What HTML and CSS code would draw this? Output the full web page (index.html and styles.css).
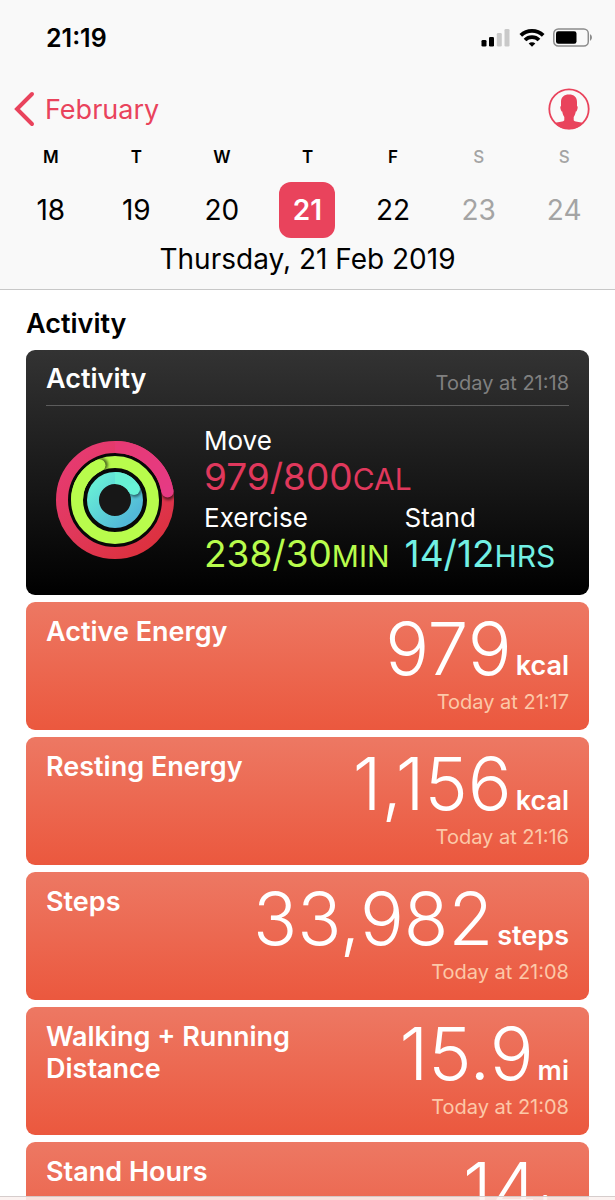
FILE: index.html
```html
<!DOCTYPE html>
<html lang="en">
<head>
<meta charset="utf-8">
<meta name="viewport" content="width=device-width, initial-scale=1">
<title>Health Data</title>
<link rel="stylesheet" href="styles.css">
</head>
<body>
<div class="app">
  <header class="header">
    <div class="status">
      <span class="time">21:19</span>
      <div class="status-icons">
        <svg width="30" height="20" viewBox="0 0 30 20" aria-hidden="true">
          <rect x="0.5" y="12" width="5" height="6.5" rx="1.3"/>
          <rect x="8" y="9" width="5" height="9.500" rx="1.300"/>
          <rect class="dim" x="15.800" y="5" width="5" height="13.500" rx="1.300"/>
          <rect class="dim" x="23.500" y="1" width="5" height="17.500" rx="1.300"/>
        </svg>
        <svg width="26" height="20" viewBox="0 0 26 20" aria-hidden="true">
          <g fill="none" stroke="#000" stroke-width="3.800">
            <path d="M1.800 7.300a16.200 16.200 0 0 1 22.400 0"/>
            <path d="M6 12a10 10 0 0 1 14 0"/>
          </g>
          <path d="M13 18.800l-3.300-3.200a4.700 4.700 0 0 1 6.600 0z"/>
        </svg>
        <svg width="42" height="20" viewBox="0 0 42 20" aria-hidden="true">
          <rect x="0.800" y="1" width="34.500" height="17" rx="4.500" fill="none" stroke="#8c8c8c" stroke-width="1.500"/>
          <rect x="3" y="3.300" width="20.500" height="12.400" rx="2.300"/>
          <path d="M37 6.300c2.600 1 2.600 5.400 0 6.400z" fill="#8c8c8c"/>
        </svg>
      </div>
    </div>
    <nav class="nav">
      <button class="back" type="button">
        <svg width="22" height="36" viewBox="0 0 22 36" aria-hidden="true"><path d="M18 3L3 18l15 15" fill="none" stroke="currentColor" stroke-width="4" stroke-linecap="round" stroke-linejoin="miter"/></svg>
        <span>February</span>
      </button>
      <button class="profile" type="button" aria-label="Profile">
        <svg width="42" height="42" viewBox="0 0 42 42" aria-hidden="true">
          <circle cx="21" cy="21" r="19.700" fill="none" stroke="currentColor" stroke-width="1.800"/>
          <path fill="currentColor" d="M21 6.500c5 0 8 2.600 8 7.500v4c1 .2.900 2.500-.2 4.700-.4.700-.8.700-1 .9-.4 2.700-1.300 4.300-2.100 5.500v3.200c.6 1.600 5.300 1.500 9.300 2.700C31.500 39.500 26.500 41.200 21 41.200S10.500 39.500 7 35c4-1.200 8.700-1.100 9.300-2.700v-3.200c-.8-1.200-1.700-2.800-2.100-5.500-.2-.2-.6-.2-1-.9-1.100-2.200-1.200-4.500-.2-4.700v-4c0-4.900 3-7.500 8-7.500z"/>
        </svg>
      </button>
    </nav>
    <div class="week">
      <div class="day"><span class="name">M</span><button type="button" class="date">18</button></div>
      <div class="day"><span class="name">T</span><button type="button" class="date">19</button></div>
      <div class="day"><span class="name">W</span><button type="button" class="date">20</button></div>
      <div class="day"><span class="name">T</span><button type="button" class="date selected">21</button></div>
      <div class="day"><span class="name">F</span><button type="button" class="date">22</button></div>
      <div class="day weekend"><span class="name">S</span><button type="button" class="date">23</button></div>
      <div class="day weekend"><span class="name">S</span><button type="button" class="date">24</button></div>
    </div>
    <p class="full-date">Thursday, 21 Feb 2019</p>
  </header>

  <main class="content">
    <h1 class="section-title">Activity</h1>
    <div class="cards">
      <section class="activity">
        <div class="activity-head">
          <h2 class="title">Activity</h2>
          <span class="stamp">Today at 21:18</span>
        </div>
        <div class="activity-body">
          <svg class="rings" width="120" height="120" viewBox="-60 -60 120 120" aria-hidden="true">
            <defs>
              <linearGradient id="moveBase" gradientUnits="userSpaceOnUse" x1="-30" y1="-50" x2="40" y2="50">
                <stop offset="0" stop-color="#e63a70"/><stop offset=".5" stop-color="#e0385a"/><stop offset="1" stop-color="#dc303c"/>
              </linearGradient>
              <linearGradient id="moveTip" gradientUnits="userSpaceOnUse" x1="0" y1="-53" x2="53" y2="-8">
                <stop offset="0" stop-color="#e63a74"/><stop offset="1" stop-color="#e63a84"/>
              </linearGradient>
              <linearGradient id="standBase" gradientUnits="userSpaceOnUse" x1="-14" y1="-20" x2="20" y2="14">
                <stop offset="0" stop-color="#66ead6"/><stop offset="1" stop-color="#52b8d8"/>
              </linearGradient>
              <filter id="soft" x="-50%" y="-50%" width="200%" height="200%"><feGaussianBlur stdDeviation="1.500"/></filter>
              <clipPath id="moveClip"><path clip-rule="evenodd" d="M-59 0a59 59 0 0 1 118 0a59 59 0 0 1-118 0zM-47 0a47 47 0 0 0 94 0a47 47 0 0 0-94 0z"/></clipPath>
              <clipPath id="exClip"><path clip-rule="evenodd" d="M-44 0a44 44 0 0 1 88 0a44 44 0 0 1-88 0zM-32 0a32 32 0 0 0 64 0a32 32 0 0 0-64 0z"/></clipPath>
              <clipPath id="stClip"><path clip-rule="evenodd" d="M-28 0a28 28 0 0 1 56 0a28 28 0 0 1-56 0zM-16 0a16 16 0 0 0 32 0a16 16 0 0 0-32 0z"/></clipPath>
            </defs>
            <circle r="48" fill="#080808"/>
            <circle r="53" fill="none" stroke="url(#moveBase)" stroke-width="12"/>
            <g clip-path="url(#moveClip)"><circle cx="53.300" cy="-6.500" r="6.500" filter="url(#soft)" opacity=".6"/></g>
            <path d="M0-53A53 53 0 0 1 52.500-8.500" fill="none" stroke="url(#moveTip)" stroke-width="12"/>
            <circle cx="52.600" cy="-8.500" r="6" fill="#e63a84"/>
            <circle r="38" fill="none" stroke="#b8fc4c" stroke-width="12"/>
            <g clip-path="url(#exClip)"><circle cx="-13.500" cy="-35.300" r="6.500" filter="url(#soft)" opacity=".6"/></g>
            <path d="M-38 0A38 38 0 0 1-15.500-34.700" fill="none" stroke="#b8fc4c" stroke-width="12"/>
            <circle cx="-15.500" cy="-34.700" r="6" fill="#b8fc4c"/>
            <circle r="22" fill="#171717" stroke="url(#standBase)" stroke-width="12"/>
            <g clip-path="url(#stClip)"><circle cx="20" cy="-9.500" r="6.500" filter="url(#soft)" opacity=".5"/></g>
            <path d="M0-22A22 22 0 0 1 19-11" fill="none" stroke="#68f0d4" stroke-width="12"/>
            <circle cx="19" cy="-11" r="6" fill="#68f4d8"/>
          </svg>
          <dl class="goals">
            <div class="goal move"><dt>Move</dt><dd>979/800<span class="cap">CAL</span></dd></div>
            <div class="goal exercise"><dt>Exercise</dt><dd>238/30<span class="cap">MIN</span></dd></div>
            <div class="goal stand"><dt>Stand</dt><dd>14/12<span class="cap">HRS</span></dd></div>
          </dl>
        </div>
      </section>

      <section class="card">
        <h2 class="title">Active Energy</h2>
        <div class="reading"><p class="value">979<span class="unit">kcal</span></p><p class="stamp">Today at 21:17</p></div>
      </section>
      <section class="card">
        <h2 class="title">Resting Energy</h2>
        <div class="reading"><p class="value">1,156<span class="unit">kcal</span></p><p class="stamp">Today at 21:16</p></div>
      </section>
      <section class="card">
        <h2 class="title">Steps</h2>
        <div class="reading"><p class="value">33,982<span class="unit">steps</span></p><p class="stamp">Today at 21:08</p></div>
      </section>
      <section class="card">
        <h2 class="title">Walking + Running Distance</h2>
        <div class="reading"><p class="value">15.9<span class="unit">mi</span></p><p class="stamp">Today at 21:08</p></div>
      </section>
      <section class="card">
        <h2 class="title">Stand Hours</h2>
        <div class="reading"><p class="value">14<span class="unit">hr</span></p></div>
      </section>
    </div>
  </main>
  <div class="tabbar"></div>
</div>
</body>
</html>
```
FILE: styles.css
```css
* { box-sizing: border-box; }

body {
  margin: 0;
  background: #fff;
  color: #000;
  font-family: Inter, "Liberation Sans", sans-serif;
}

h1, h2, p, dl, dd { margin: 0; }

button {
  padding: 0;
  border: 0;
  background: none;
  color: inherit;
  font: inherit;
  cursor: pointer;
}

svg { display: block; }

.app {
  position: relative;
  display: flex;
  flex-direction: column;
  height: 100vh;
  overflow: hidden;
}

.header {
  flex: none;
  padding-top: 20px;
  background: #f9f9f9;
  border-bottom: 1px solid #c8c8c8;
}

.status {
  display: flex;
  align-items: center;
  justify-content: space-between;
  height: 36px;
  padding: 0 20px 0 46px;
}

.time { font-size: 25px; font-weight: 600; }

.status-icons { display: flex; gap: 8px; }

.dim { fill: #c9c9c9; }

.nav {
  display: flex;
  align-items: center;
  justify-content: space-between;
  height: 62px;
  padding: 0 25px 0 14px;
  margin-top: 22px;
  color: #e9435c;
}

.back {
  display: flex;
  align-items: center;
  gap: 9px;
  font-size: 27px;
}

.week {
  display: grid;
  grid-template-columns: repeat(7, 1fr);
  padding: 2px 8px 0;
}

.day {
  display: flex;
  flex-direction: column;
  align-items: center;
  gap: 10px;
}

.name {
  font-size: 17px;
  font-weight: 600;
  line-height: 30px;
}

.date {
  width: 56px;
  height: 56px;
  border-radius: 12px;
  font-size: 28px;
  line-height: 54px;
}

.weekend { color: #a4a4a4; }
.weekend .name { font-weight: 500; }

.selected {
  background: #e9435c;
  color: #fff;
  font-weight: 600;
}

.full-date {
  padding: 3px 0 12px;
  font-size: 28px;
  line-height: 36px;
  text-align: center;
}

.content {
  flex: 1;
  min-height: 0;
  padding: 16px 26px 0;
  overflow: hidden;
}

.section-title {
  font-size: 27px;
  font-weight: 600;
  line-height: 36px;
}

.cards {
  display: flex;
  flex-direction: column;
  gap: 7px;
  margin-top: 8px;
}

.title {
  font-size: 27px;
  font-weight: 600;
  line-height: 32px;
}

.stamp { font-size: 20px; line-height: 24px; }

.activity {
  padding: 13px 20px 21px;
  border-radius: 9px;
  background: linear-gradient(#333, #000);
  color: #fff;
}

.activity-head {
  display: flex;
  align-items: flex-end;
  justify-content: space-between;
  padding-bottom: 10px;
  border-bottom: 1px solid #5c5c5c;
}

.activity-head .stamp { color: #808080; }

.activity-body {
  display: flex;
  align-items: center;
  gap: 29px;
  padding: 19px 0 0 9px;
}

.rings { flex: none; }

.goals {
  display: grid;
  grid-template-columns: auto auto;
  justify-content: start;
  gap: 5px 15px;
}

.move { grid-column: 1 / -1; }

.goal dt { font-size: 26px; line-height: 32px; }
.goal dd { font-size: 37px; line-height: 40px; white-space: nowrap; }
.cap { font-size: 30px; line-height: 30px; }

.move dd { color: #e0385c; }
.exercise dd { color: #b8fc4c; }
.stand dd { color: #72f0e4; }

.card {
  display: flex;
  flex: none;
  justify-content: space-between;
  min-height: 128px;
  padding: 14px 20px 12px;
  border-radius: 9px;
  background: linear-gradient(#ed7863, #eb583e);
  color: #fff;
}

.card .title { max-width: 260px; }

.reading { text-align: right; }

.value {
  font-size: 73px;
  font-weight: 300;
  line-height: 66px;
  white-space: nowrap;
}

.unit {
  margin-left: 4px;
  font-size: 27px;
  font-weight: 600;
  line-height: 27px;
}

.reading .stamp { padding-top: 8px; color: #fcc8a8; }

.tabbar {
  position: absolute;
  right: 0;
  bottom: 0;
  left: 0;
  height: 4px;
  border-top: 1px solid rgba(190, 180, 180, 0.6);
  background: rgba(250, 240, 238, 0.88);
}
```
